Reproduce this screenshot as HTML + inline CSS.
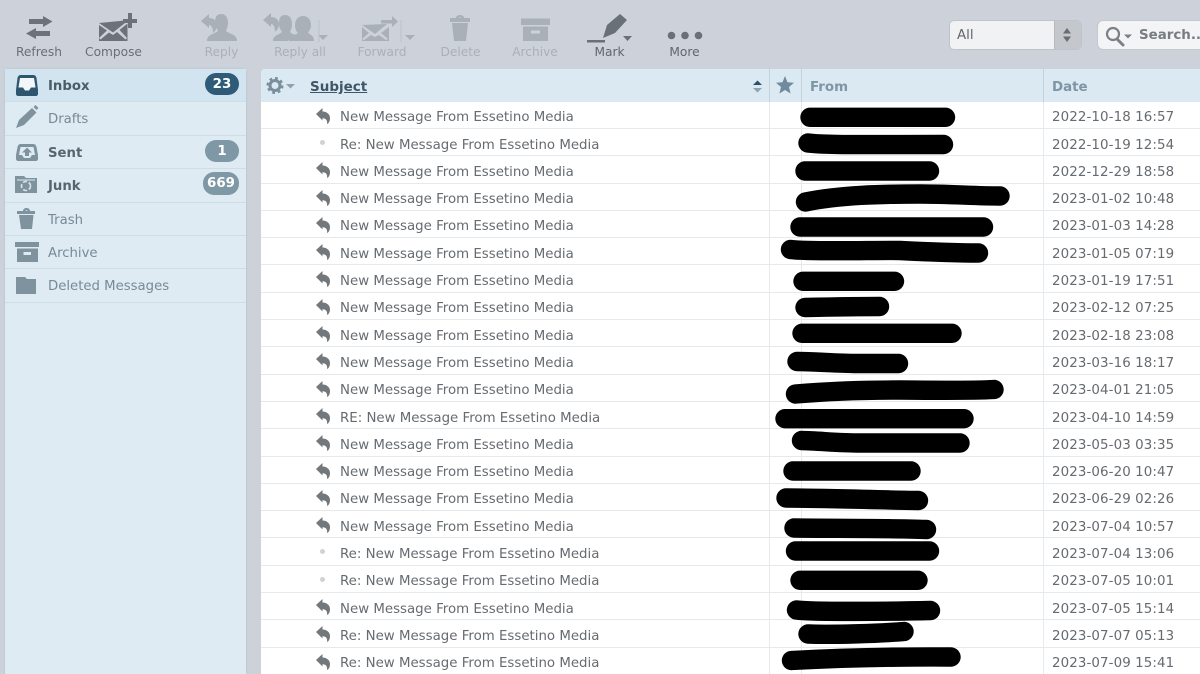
<!DOCTYPE html>
<html><head><meta charset="utf-8">
<style>
*{box-sizing:border-box}
html,body{margin:0;padding:0;width:1200px;height:674px;overflow:hidden;background:#cdd2da}
#w{position:relative;width:1200px;height:674px;overflow:hidden;background:#cdd2da;font-family:"DejaVu Sans","Liberation Sans",sans-serif;filter:blur(.35px)}
.a{position:absolute}
.tb{position:absolute;top:45px;font-size:12.2px;line-height:14px;color:#696f75;transform:translateX(-50%);white-space:nowrap}
.tb.d{color:#aab0b7}
.side{position:absolute;left:5px;top:69px;width:241px;height:605px;background:#deebf3;border-radius:4px 4px 0 0;box-shadow:0 0 2px #b5bdc6}
.fi{position:absolute;left:0;width:241px;height:33.4px;border-bottom:1px solid #cfdde6;color:#788a96;font-size:13.25px;line-height:35px;padding-left:43px}
.fi.b{font-weight:bold;color:#566671}
.bd{position:absolute;right:7px;top:4px;height:22px;min-width:34px;padding:0 6px;border-radius:11px;background:#7f98a6;color:#fff;font-weight:bold;font-size:13.4px;line-height:23px;text-align:center}
.list{position:absolute;left:261px;top:69px;width:939px;height:605px;background:#fff;overflow:hidden;border-radius:4px 0 0 0}
.hd{position:absolute;left:0;top:0;width:939px;height:33px;background:#dbe9f2}
.vl{position:absolute;top:0;width:1px;height:605px;background:#e4ebf0}
.hv{position:absolute;top:0;width:1px;height:33px;background:#c3d2dc}
.r{position:absolute;left:0;width:939px;border-bottom:1px solid #e6e9ec;height:27.3px;margin-top:-.4px}
.s{position:absolute;left:79px;top:8.6px;font-size:13.35px;line-height:16px;color:#666b70;white-space:nowrap}
.t{position:absolute;left:791px;top:8.6px;font-size:13.4px;line-height:16px;color:#666b70;white-space:nowrap;letter-spacing:.1px}
.ic{position:absolute;left:55px;top:6px}
.dot{position:absolute;left:58.5px;top:11px;width:5px;height:5px;border-radius:50%;background:#cfd3d6}
</style></head><body><div id="w">

<svg width="0" height="0" style="position:absolute"><symbol id="rp" viewBox="0 0 14 16"><path d="M0 6L6.500 0V3.500C11 3.500 14 6.500 14 10 14 13 13 15 11 16 11.500 13 10.500 10.300 6.500 10.300V12.500Z" fill="#73787c"/></symbol></svg>

<!-- toolbar icons -->
<svg class="a" style="left:0;top:0" width="760" height="46" viewBox="0 0 760 46">
 <g fill="#6d7278">
  <path d="M29 19H43V16L52.500 21.500 43 27V24H29Z"/>
  <path d="M50 31H36V28L26 33.500 36 39V36H50Z"/>
  <path d="M99 23L125 20.500 127.500 21 113 32.500Z"/>
  <path d="M99 25V41H127.500V23.500L119.500 30 127 38 125.500 39.500 117 32 113 35 109 32.500 100.500 39.500 99 38 107 30.500Z"/>
  <path d="M128 13H132V19H137V23H132V28H128V23H123V19H128Z"/>
 </g>
 <g fill="#aab0b8">
  <path d="M200 20L208 13V17C213 17 216 20 216 24 216 28 214 30 212 32 212 28 211 24 208 24V27Z" transform="translate(1,1)"/>
  <path d="M221 14C226 14 228 18 228 23 228 27 226 30 226 31 229 34 237 34 237 41H207C207 34 215 34 218 31 218 30 215 27 215 23 215 18 216 14 221 14Z"/>
  <path d="M263 20L271 13V17C276 17 279 20 279 24 279 28 277 30 275 32 275 28 274 24 271 24V27Z"/>
  <path d="M285 15C290 15 292 19 292 24 292 28 291 30 290 32 292 34 296 35 296 37 292 38 289 39 288 41H273C273 35 279 35 282 32 281 30 279 28 279 24 279 19 280 15 285 15Z"/>
  <path d="M303 16C308 16 311 20 311 25 311 29 309 31 308 33 311 35 314 36 314 41H289C289 36 295 35 298 33 296 31 295 29 295 25 295 20 298 16 303 16Z"/>
  <path d="M362 25L387 24 375 34Z"/>
  <path d="M362 27V41H389V27L381 33 388 39 386 40 379 35 375 37 371 35 364 40 362 39 369 33Z"/>
  <path d="M381 20H392V16L398 21.500 392 27V23.500H381Z"/>
  <path d="M450 18H470V22H450Z"/>
  <path d="M456 18C456 14 464 14 464 18H461C461 17 459 17 459 18Z"/>
  <path d="M452 23H468L466 41H454Z"/>
  <path d="M521 18.500H550V25H521Z"/>
  <path d="M523 26.500H548V41H523ZM531 30.500V33.500H540V30.500Z" fill-rule="evenodd"/>
  <path d="M318 35L328 35 323 40Z M405 35L415 35 410 40Z"/>
 </g>
 <rect x="318.500" y="20" width="1" height="22" fill="#bcc1c8"/>
 <rect x="400.500" y="20" width="1" height="22" fill="#bcc1c8"/>
 <g fill="#6a7077">
  <path d="M587 40H605V42.500H587Z"/>
  <path d="M603 38L607 25 620 14 627 20 615 33Z"/>
  <path d="M623 36L632 36 627.500 41Z"/>
  <circle cx="671.500" cy="35.500" r="3.800"/><circle cx="685" cy="35.500" r="3.800"/><circle cx="698.500" cy="35.500" r="3.800"/>
 </g>
</svg>
<div class="tb" style="left:39px">Refresh</div>
<div class="tb" style="left:113.500px">Compose</div>
<div class="tb d" style="left:221.500px">Reply</div>
<div class="tb d" style="left:300px">Reply all</div>
<div class="tb d" style="left:382px">Forward</div>
<div class="tb d" style="left:460.500px">Delete</div>
<div class="tb d" style="left:535px">Archive</div>
<div class="tb" style="left:609.500px;color:#5f666c">Mark</div>
<div class="tb" style="left:684.500px;color:#5f666c">More</div>

<!-- filter -->
<div class="a" style="left:949px;top:20px;width:133px;height:30px;background:#f1f2f3;border:1px solid #bfc4ca;border-radius:5px;overflow:hidden;font-size:13.4px;line-height:30px;color:#62686e;padding-left:7px">All
 <div class="a" style="left:104px;top:0;width:28px;height:28px;background:#c4c8cc;border-left:1px solid #b5babf"></div>
</div>
<svg class="a" style="left:1060px;top:26px" width="14" height="18"><path d="M7 2L11 7.500H3ZM7 16L3 10.500H11Z" fill="#686e74"/></svg>
<div class="a" style="left:1097px;top:20px;width:120px;height:30px;background:#f3f4f5;border:1px solid #c4c9ce;border-radius:6px;font-size:13.4px;line-height:30px;color:#777c82;font-weight:bold;padding-left:41px;white-space:nowrap">Search...</div>
<svg class="a" style="left:1104px;top:25px" width="32" height="22"><circle cx="9" cy="9" r="6" fill="none" stroke="#7b8086" stroke-width="2.200"/><path d="M13 14L19 20" stroke="#7b8086" stroke-width="3" stroke-linecap="round"/><path d="M20 9.500H28L24 13.500Z" fill="#7b8086"/></svg>

<!-- sidebar -->
<div class="side">
 <div class="fi b" style="top:0;background:#d2e4ef;color:#4a5c68">Inbox<span class="bd" style="background:#2e5b78">23</span></div>
 <div class="fi" style="top:33.4px">Drafts</div>
 <div class="fi b" style="top:66.8px">Sent<span class="bd">1</span></div>
 <div class="fi b" style="top:100.2px">Junk<span class="bd" style="top:3px;height:23px;line-height:24px;padding:0 4px">669</span></div>
 <div class="fi" style="top:133.6px">Trash</div>
 <div class="fi" style="top:167px">Archive</div>
 <div class="fi" style="top:200.4px">Deleted Messages</div>
</div>
<svg class="a" style="left:10px;top:70px" width="32" height="235" viewBox="10 70 32 235">
 <path fill="#2f566f" d="M21 75H33C35 75 36 76 36.500 78L38 90V94C38 95 37 96 36 96H18C17 96 16 95 16 94V90L17.500 78C18 76 19 75 21 75Z"/>
 <path fill="#f2f6f9" d="M20 78H34L35.500 87.500H31L29 90.500H25L23 87.500H18.500Z"/>
 <g fill="#7f939f">
  <path d="M16 128L19 120 32 108 36.500 112.500 24 125Z"/><path d="M33.500 107L35.500 105 38.500 108 36.500 110Z"/>
  <path d="M20.500 144H33.500C35 144 36 145 36.500 147L38 155V159C38 160 37 161 36 161H18C17 161 16 160 16 159V155L17.500 147C18 145 19 144 20.500 144ZM27 147.500L22 152.500H25V156H29V152.500H32ZM20.500 147L19 155H22L24 158H30L32 155H35L33.500 147Z" fill-rule="evenodd"/>
  <path d="M15 178V176H24L26 178H37V193H15ZM17 180.500H35V179.500H17Z" fill-rule="evenodd"/>
  <path d="M17 211H35V214H17ZM23 211C23 207 30 207 30 211H27.500C27.500 210 25.500 210 25.500 211ZM19 215H33.500L32 229H21Z"/>
  <path d="M15 242H39V247H15ZM17 248.500H38V262H17ZM23.500 252V255H31V252Z" fill-rule="evenodd"/>
  <path d="M16 279V277H25L27 279H36V294H16Z"/>
 </g>
 <circle cx="26" cy="186" r="4.500" fill="none" stroke="#d7e4ec" stroke-width="1.600" stroke-dasharray="4 2"/>
</svg>

<!-- list -->
<div class="list">
 <div class="hd"></div>
 <div class="vl" style="left:508px"></div><div class="vl" style="left:540px"></div><div class="vl" style="left:782px"></div>
 <div class="hv" style="left:508px"></div><div class="hv" style="left:540px"></div><div class="hv" style="left:782px"></div>
 <div class="a" style="left:49px;top:9.6px;font-size:13.5px;line-height:17px;font-weight:bold;color:#3f5668;text-decoration:underline">Subject</div>
 <div class="a" style="left:549px;top:9.6px;font-size:13.4px;line-height:17px;font-weight:bold;color:#7d95a4">From</div>
 <div class="a" style="left:791px;top:9.6px;font-size:13.4px;line-height:17px;font-weight:bold;color:#7d95a4">Date</div>
 <svg class="a" style="left:0;top:0" width="540" height="33">
  <g fill="#7a8f9c"><circle cx="14" cy="16.500" r="5" fill="none" stroke="#7a8f9c" stroke-width="3"/><circle cx="14" cy="16.500" r="7.300" fill="none" stroke="#7a8f9c" stroke-width="2.400" stroke-dasharray="2.800 2.900"/>
  <path d="M25 15H34L29.500 19.500Z" fill="#8fa3af"/>
  <path d="M496.500 11.500L501 16H492Z" fill="#2e5168"/><path d="M496.500 23.500L501 19H492Z" fill="#8fa3af"/>
  <path d="M524 7L526.500 13.200 533 13.700 528 18 529.600 24.500 524 21 518.400 24.500 520 18 515 13.700 521.500 13.200Z" fill="#6f8b9d"/></g>
 </svg>
 <div class="r" style="top:33px"><svg class="ic" width="14" height="16"><use href="#rp"/></svg><span class="s">New Message From Essetino Media</span><span class="t">2022-10-18 16:57</span></div>
 <div class="r" style="top:60.3px"><i class="dot"></i><span class="s">Re: New Message From Essetino Media</span><span class="t">2022-10-19 12:54</span></div>
 <div class="r" style="top:87.6px"><svg class="ic" width="14" height="16"><use href="#rp"/></svg><span class="s">New Message From Essetino Media</span><span class="t">2022-12-29 18:58</span></div>
 <div class="r" style="top:114.9px"><svg class="ic" width="14" height="16"><use href="#rp"/></svg><span class="s">New Message From Essetino Media</span><span class="t">2023-01-02 10:48</span></div>
 <div class="r" style="top:142.2px"><svg class="ic" width="14" height="16"><use href="#rp"/></svg><span class="s">New Message From Essetino Media</span><span class="t">2023-01-03 14:28</span></div>
 <div class="r" style="top:169.5px"><svg class="ic" width="14" height="16"><use href="#rp"/></svg><span class="s">New Message From Essetino Media</span><span class="t">2023-01-05 07:19</span></div>
 <div class="r" style="top:196.8px"><svg class="ic" width="14" height="16"><use href="#rp"/></svg><span class="s">New Message From Essetino Media</span><span class="t">2023-01-19 17:51</span></div>
 <div class="r" style="top:224.1px"><svg class="ic" width="14" height="16"><use href="#rp"/></svg><span class="s">New Message From Essetino Media</span><span class="t">2023-02-12 07:25</span></div>
 <div class="r" style="top:251.4px"><svg class="ic" width="14" height="16"><use href="#rp"/></svg><span class="s">New Message From Essetino Media</span><span class="t">2023-02-18 23:08</span></div>
 <div class="r" style="top:278.7px"><svg class="ic" width="14" height="16"><use href="#rp"/></svg><span class="s">New Message From Essetino Media</span><span class="t">2023-03-16 18:17</span></div>
 <div class="r" style="top:306px"><svg class="ic" width="14" height="16"><use href="#rp"/></svg><span class="s">New Message From Essetino Media</span><span class="t">2023-04-01 21:05</span></div>
 <div class="r" style="top:333.3px"><svg class="ic" width="14" height="16"><use href="#rp"/></svg><span class="s">RE: New Message From Essetino Media</span><span class="t">2023-04-10 14:59</span></div>
 <div class="r" style="top:360.6px"><svg class="ic" width="14" height="16"><use href="#rp"/></svg><span class="s">New Message From Essetino Media</span><span class="t">2023-05-03 03:35</span></div>
 <div class="r" style="top:387.9px"><svg class="ic" width="14" height="16"><use href="#rp"/></svg><span class="s">New Message From Essetino Media</span><span class="t">2023-06-20 10:47</span></div>
 <div class="r" style="top:415.2px"><svg class="ic" width="14" height="16"><use href="#rp"/></svg><span class="s">New Message From Essetino Media</span><span class="t">2023-06-29 02:26</span></div>
 <div class="r" style="top:442.5px"><svg class="ic" width="14" height="16"><use href="#rp"/></svg><span class="s">New Message From Essetino Media</span><span class="t">2023-07-04 10:57</span></div>
 <div class="r" style="top:469.8px"><i class="dot"></i><span class="s">Re: New Message From Essetino Media</span><span class="t">2023-07-04 13:06</span></div>
 <div class="r" style="top:497.1px"><i class="dot"></i><span class="s">Re: New Message From Essetino Media</span><span class="t">2023-07-05 10:01</span></div>
 <div class="r" style="top:524.4px"><svg class="ic" width="14" height="16"><use href="#rp"/></svg><span class="s">New Message From Essetino Media</span><span class="t">2023-07-05 15:14</span></div>
 <div class="r" style="top:551.7px"><svg class="ic" width="14" height="16"><use href="#rp"/></svg><span class="s">Re: New Message From Essetino Media</span><span class="t">2023-07-07 05:13</span></div>
 <div class="r" style="top:579px"><svg class="ic" width="14" height="16"><use href="#rp"/></svg><span class="s">Re: New Message From Essetino Media</span><span class="t">2023-07-09 15:41</span></div>
</div>

<!-- redaction strokes -->
<svg class="a" style="left:0;top:0" width="1200" height="674" fill="none" stroke="#000" stroke-width="19.4" stroke-linecap="round" stroke-linejoin="round">
 <path d="M810 117.300H945.500"/>
 <path d="M808 143C825 145 850 144.500 943.500 144.500"/>
 <path d="M805 171H929.500"/>
 <path d="M805.500 202C840 195 880 194 920 194 950 194 975 196 1000 196"/>
 <path d="M800 227H983.500"/>
 <path d="M790.500 249.500C810 252 880 250 900 250.500 930 252 950 253 978.500 253"/>
 <path d="M803 281.300H894.500"/>
 <path d="M805 307.500C830 307 860 306.500 879.500 306.500"/>
 <path d="M802 333.300H952"/>
 <path d="M797 361.500C825 362 840 363.500 860 363.500H898.500"/>
 <path d="M795.500 394C830 391 870 390 900 390 950 390.500 975 390.500 994 389.500"/>
 <path d="M785 418.700H964"/>
 <path d="M801.500 440.500C820 441 840 443 860 443H960"/>
 <path d="M793 471H911"/>
 <path d="M786 498C820 498 880 500 918.500 500.500"/>
 <path d="M794 528C830 528.500 890 528 926.500 529.500"/>
 <path d="M795.500 551H929.500"/>
 <path d="M800 580.300H918"/>
 <path d="M796.500 610C810 612 890 611.500 930.500 610.500"/>
 <path d="M808 634C830 635 880 633.500 904 631.500"/>
 <path d="M791.500 660.500C820 659 880 656.500 951 657"/>
</svg>
</div></body></html>
